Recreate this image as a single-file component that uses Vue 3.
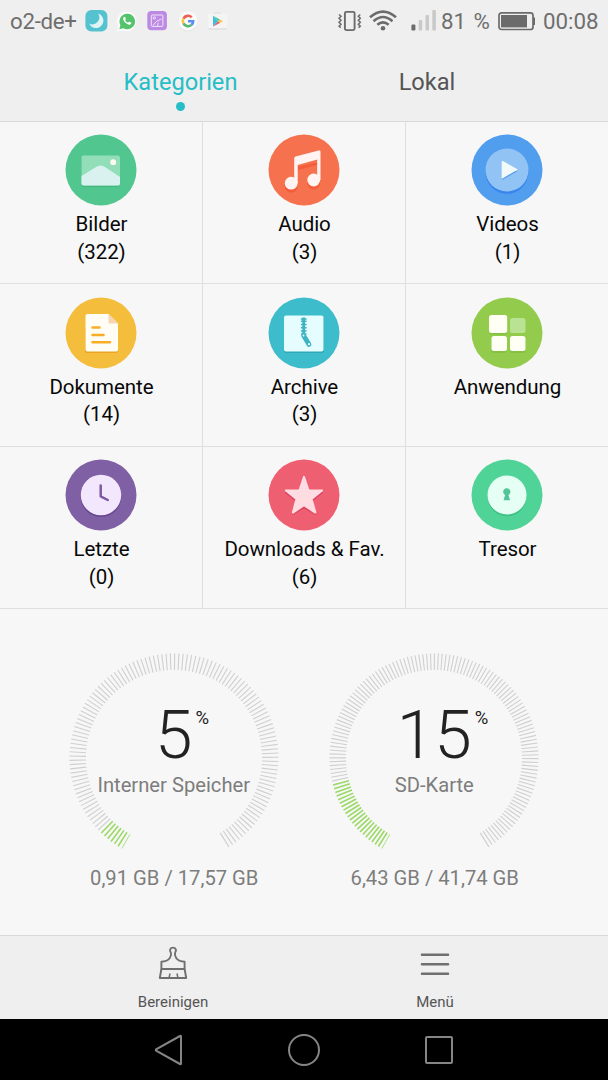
<script setup>
const categories = [
  { id: 'images', name: 'Bilder', count: '(322)', color: '#52c68f' },
  { id: 'audio', name: 'Audio', count: '(3)', color: '#f6724f' },
  { id: 'videos', name: 'Videos', count: '(1)', color: '#519eef' },
  { id: 'docs', name: 'Dokumente', count: '(14)', color: '#f5bd3c' },
  { id: 'archive', name: 'Archive', count: '(3)', color: '#3dbccb' },
  { id: 'apps', name: 'Anwendung', count: '', color: '#93cb4d' },
  { id: 'recent', name: 'Letzte', count: '(0)', color: '#8060a4' },
  { id: 'favorites', name: 'Downloads & Fav.', count: '(6)', color: '#ef5f72' },
  { id: 'safe', name: 'Tresor', count: '', color: '#50d397' },
]

const makeTicks = (total, percent) =>
  Array.from({ length: total }, (_, i) => {
    const a = ((30 + (i * 298.3) / (total - 1)) * Math.PI) / 180
    const s = -Math.sin(a)
    const c = Math.cos(a)
    return {
      on: i <= Math.round((total * percent) / 100),
      line: { x1: 105 + 88 * s, y1: 105 + 88 * c, x2: 105 + 104.5 * s, y2: 105 + 104.5 * c },
    }
  })

const storages = [
  { name: 'Interner Speicher', percent: 5, usage: '0,91 GB / 17,57 GB', ticks: makeTicks(128, 5) },
  { name: 'SD-Karte', percent: 15, usage: '6,43 GB / 41,74 GB', ticks: makeTicks(140, 15) },
]
</script>

<template>
  <div class="screen">
    <header class="top">
      <div class="status">
        <span class="carrier">o2-de+</span>
        <div class="notes">
          <svg viewBox="0 0 24 24">
            <rect x="1.4" y="1" width="22" height="21.6" rx="6" fill="#55c3cf" />
            <path d="M14.2 4.6A7.4 7.4 0 1 1 5.2 14.6 A7 7 0 0 0 14.2 4.6Z" fill="#dff4f6" />
          </svg>
          <svg viewBox="0 0 24 24">
            <path d="M2.8 21.8 4 17A9 9 0 1 1 8 20.5Z" fill="#fff" stroke="#fafafa" stroke-width="1.5" />
            <path d="M4.300 20.300 5.400 16.200A7.800 7.800 0 1 1 8.300 19.200Z" fill="#55c36b" />
            <path d="M9.3 7.7c-2.2 1.2-.8 4 .9 5.800 1.900 1.900 4.600 3.100 5.900 1.200.6-.9.1-1.200-1.700-2-.7-.3-1.100 1-1.600.9-1.100-.3-2.100-1.300-2.600-2.300-.2-.5.8-.8.6-1.600-.4-1.300-.8-2.200-1.500-2Z" fill="#fff" />
          </svg>
          <svg viewBox="0 0 24 24">
            <rect x="2.300" y="2" width="19.600" height="19.300" rx="4" fill="#bd8ae3" />
            <g fill="none" stroke="#f1e3fb" stroke-width="1">
              <rect x="6.300" y="6" width="11.600" height="11.400" rx=".8" />
              <circle cx="9.300" cy="9" r="1.200" />
              <path d="M8 16.500Q10.500 11.500 16.500 10M12.500 17 13.300 13.500" />
            </g>
          </svg>
          <svg viewBox="0 0 24 24">
            <circle cx="12" cy="12.500" r="9.800" fill="#dedede" />
            <circle cx="12" cy="12" r="9.700" fill="#fafafa" />
            <g fill="none" stroke-width="2.600">
              <path d="M15.700 8.300A5.200 5.200 0 0 0 7.400 9.600" stroke="#ee5f55" />
              <path d="M7.400 9.600A5.200 5.200 0 0 0 7.400 14.400" stroke="#f9c740" />
              <path d="M7.400 14.400A5.200 5.200 0 0 0 15.500 15.900" stroke="#58b870" />
              <path d="M15.500 15.900A5.200 5.200 0 0 0 17.200 12.200H12" stroke="#5792ef" />
            </g>
          </svg>
          <svg viewBox="0 0 24 24">
            <path d="M8.800 5V3.800H14.200V5" fill="none" stroke="#dfdfdf" />
            <path d="M2 5H21.500L20.900 20H2.600Z" fill="#f4f4f4" />
            <path d="M2.500 20H21" stroke="#d6d6d6" />
            <path d="M7 6.800V17.500L12.200 12.200Z" fill="#42bde0" />
            <path d="M7 6.800 12.200 12.200 14 10.400Z" fill="#49c9a0" />
            <path d="M7 17.500 12.200 12.200 14 14Z" fill="#ed5969" />
            <path d="M14 10.400 12.200 12.200 14 14 17 12.200Z" fill="#f9c348" />
          </svg>
        </div>
        <svg class="vibrate" viewBox="0 0 24 24">
          <g fill="none" stroke="#6b6b6b">
            <rect x="6.900" y="2.900" width="9.700" height="18.200" rx="1.500" stroke-width="1.900" />
            <path d="M1 5.500 3 7.200 1 9.200 3 11.200 1 13.200 3 15.200 1 17.200 2.800 18.700" stroke-width="1.500" />
            <path d="M22.300 5.500 20.300 7.200 22.300 9.200 20.300 11.200 22.300 13.200 20.300 15.200 22.300 17.200 20.500 18.700" stroke-width="1.500" />
          </g>
        </svg>
        <svg class="wifi" viewBox="0 0 28 24">
          <g fill="none" stroke="#6b6b6b" stroke-width="2.500">
            <path d="M1 8.300Q14-3 27 8.300" />
            <path d="M4.500 12.200Q14 3.900 23.500 12.200" />
            <path d="M8.300 15.800Q14 11 19.700 15.800" />
          </g>
          <circle cx="14" cy="19.300" r="2.300" fill="#6b6b6b" />
        </svg>
        <svg class="signal" viewBox="0 0 26 24">
          <rect x=".4" y="15.500" width="4" height="6" rx="1.200" fill="#6b6b6b" />
          <g fill="#c9c9c9">
            <rect x="7.700" y="11" width="3.500" height="10.500" rx="1" />
            <rect x="14.500" y="6" width="3.500" height="15.500" rx="1" />
            <rect x="21.300" y="1" width="3.600" height="20.500" rx="1" />
          </g>
        </svg>
        <span class="level">81 %</span>
        <svg class="battery" viewBox="0 0 38 20">
          <rect x="1" y="1.900" width="34" height="16.600" rx="2.500" fill="none" stroke="#6b6b6b" stroke-width="1.700" />
          <rect x="3" y="4" width="26" height="12.400" fill="#6b6b6b" />
          <path d="M36 6.500V14" stroke="#6b6b6b" stroke-width="2" />
        </svg>
        <span class="clock">00:08</span>
      </div>
      <nav class="tabs">
        <div class="tab active"><span>Kategorien</span><i></i></div>
        <div class="tab"><span>Lokal</span></div>
      </nav>
    </header>

    <main class="grid">
      <section v-for="c in categories" :key="c.id" class="cell">
        <svg class="icon" viewBox="0 0 72 72">
          <circle cx="36" cy="36" r="35.500" :fill="c.color" />
          <template v-if="c.id === 'images'">
            <rect x="16.500" y="23" width="38" height="30" rx="2" fill="#43b77f" />
            <rect x="16.500" y="21.500" width="38.500" height="30" rx="2" fill="#92deb9" />
            <path d="M16.500 42 29.500 34Q35.500 29 41.500 34L55 43V49.500Q55 51.500 53 51.500H18.500Q16.500 51.500 16.500 49.500Z" fill="#d9f2ef" />
            <circle cx="48.200" cy="28.200" r="2.900" fill="#fffdf4" />
          </template>
          <template v-else-if="c.id === 'audio'">
            <g fill="#f2532f" transform="translate(0 3)" opacity=".65">
              <circle cx="23.200" cy="49.200" r="6.500" /><circle cx="45.700" cy="46" r="6.500" />
              <path d="M30 29.500 49 25.500V28L30 33Z" />
            </g>
            <g fill="#fff4f1">
              <circle cx="23.200" cy="49.200" r="6.400" /><circle cx="45.700" cy="46" r="6.400" />
              <path d="M26.200 49V24.300Q26.200 23 27.500 22.600L50.600 16.500Q52.500 16 52.500 17.800V46H49.200V25.500L29.700 31V49Z" />
            </g>
          </template>
          <template v-else-if="c.id === 'videos'">
            <circle cx="36" cy="38.300" r="21.500" fill="#3985ec" />
            <circle cx="36" cy="36" r="21.500" fill="#92c3f5" />
            <path d="M31.200 46V29L46 37.500Z" fill="#559eed" />
            <path d="M30.700 44V27.500Q30.700 26.500 31.800 27.100L46 34.900Q46.800 35.500 46 36L31.800 44.300Q30.700 44.800 30.700 44Z" fill="#f1faf9" />
          </template>
          <template v-else-if="c.id === 'docs'">
            <rect x="20" y="30" width="32.500" height="26" rx="2" fill="#eca226" />
            <path d="M22.500 17H43.500L53 26.500V52.500Q53 54.500 51 54.500H22.500Q20.500 54.500 20.500 52.500V19Q20.500 17 22.500 17Z" fill="#fffdf4" />
            <path d="M43.500 17 53 26.500H44.500Q43.500 26.500 43.500 25.500Z" fill="#f8d5b4" />
            <path d="M27.500 30.500H34.500M27.500 38H38.500M27.500 45.200H45" stroke="#f9ad24" stroke-width="2.500" stroke-linecap="round" />
          </template>
          <template v-else-if="c.id === 'archive'">
            <rect x="16" y="20" width="40" height="36" rx="2" fill="#2fa9b8" />
            <rect x="16" y="18.500" width="39.500" height="36" rx="2" fill="#e5fdff" />
            <path d="M35.700 20.500V37" stroke="#3db4c1" stroke-width="2.800" />
            <path d="M32.900 22H38.600M32.900 24.300H38.600M32.900 27.500H38.600M32.900 30.700H38.600M32.900 34H38.600M33 37H38.500" stroke="#3db4c1" stroke-width="1.500" />
            <path d="M35.600 38.500 41 47.500" stroke="#3db4c1" stroke-width="4.800" stroke-linecap="round" />
            <circle cx="35.500" cy="38.500" r=".9" fill="#e5fdff" /><circle cx="41" cy="47.200" r="1.100" fill="#e5fdff" />
          </template>
          <template v-else-if="c.id === 'apps'">
            <g fill="#7cbd3e" opacity=".65"><rect x="18" y="20" width="18" height="17.500" rx="2" /><rect x="20.500" y="41" width="15" height="15" rx="2" /><rect x="39" y="41" width="15.500" height="15" rx="2" /></g>
            <rect x="18" y="18" width="18.200" height="18" rx="2.500" fill="#fffff5" />
            <rect x="39" y="21" width="15.500" height="15" rx="2.500" fill="#b9e293" />
            <rect x="20.500" y="39" width="15.500" height="15" rx="2.500" fill="#fffff5" />
            <rect x="39" y="39" width="15.500" height="15" rx="2.500" fill="#fffff5" />
          </template>
          <template v-else-if="c.id === 'recent'">
            <circle cx="36" cy="37.800" r="20.300" fill="#684990" />
            <circle cx="36" cy="36" r="20.200" fill="#f3e7fe" />
            <path d="M35.700 26.500V37.300L42.800 41" fill="none" stroke="#7c5aa0" stroke-width="2.500" stroke-linecap="round" stroke-linejoin="round" />
          </template>
          <template v-else-if="c.id === 'favorites'">
            <path d="M36 20 40.500 32.500 54 33.500 43.500 42 47.500 55 36 48.500 25 55 28.500 42 18 33.500 31.500 32.500Z" fill="#e14662" stroke="#e14662" stroke-width="2" stroke-linejoin="round" />
            <path d="M36 18 40.500 31.500 54 31.500 43.500 40 47.300 53.500 36 46 25 53.500 28.500 40 18 31.500 31.500 31.500Z" fill="#ffdce2" stroke="#ffdce2" stroke-width="2.200" stroke-linejoin="round" />
          </template>
          <template v-else>
            <circle cx="36" cy="38" r="19.300" fill="#3cc083" />
            <circle cx="36" cy="36" r="19.500" fill="#e5fff5" />
            <path d="M34.100 36A3.600 3.600 0 1 1 37.500 36L39 41.200H32.600Z" fill="#54c596" />
          </template>
        </svg>
        <span class="label">{{ c.name }}</span>
        <span class="label">{{ c.count }}</span>
      </section>
    </main>

    <section class="storage">
      <div v-for="s in storages" :key="s.name" class="gauge">
        <div class="dial">
          <svg class="ring" viewBox="0 0 210 210">
            <line v-for="(t, i) in s.ticks" :key="i" v-bind="t.line" :class="{ on: t.on, first: i === 0 }" />
          </svg>
          <div class="value"><span class="num">{{ s.percent }}<sup>%</sup></span></div>
          <div class="name">{{ s.name }}</div>
        </div>
        <div class="usage">{{ s.usage }}</div>
      </div>
    </section>

    <footer class="actions">
      <div class="action">
        <svg viewBox="0 0 32 36">
          <g fill="none" stroke="#6f6f6f" stroke-width="1.900" stroke-linejoin="round">
            <path d="M13.800 7.500Q12.600 6 13.200 4.300 14 2.600 16 2.600T18.800 4.300Q19.400 6 18.200 7.500C17.600 9 18 11.300 19.200 13 21.400 16 24 16.600 27.600 16.700V24H4.400V16.700C8 16.600 10.600 16 12.800 13 14 11.300 14.400 9 13.800 7.500Z" />
            <path d="M4.400 24 2.800 33H29.200L27.600 24" />
          </g>
          <path d="M13 28.500 12 33M20 28.500 21 33" stroke="#6f6f6f" stroke-width="1.500" />
        </svg>
        <span>Bereinigen</span>
      </div>
      <div class="action">
        <svg viewBox="0 0 32 36">
          <path d="M3 9.700H29M3 19.200H29M3 28.700H29" stroke="#6f6f6f" stroke-width="2.600" stroke-linecap="round" />
        </svg>
        <span>Menü</span>
      </div>
    </footer>

    <footer class="navbar">
      <svg viewBox="0 0 36 36"><path d="M30 4.600V31.400Q30 32.500 29 32L5.500 19Q4 18 5.500 17L29 4Q30 3.500 30 4.600Z" /></svg>
      <svg viewBox="0 0 36 36"><circle cx="18" cy="18" r="15" /></svg>
      <svg viewBox="0 0 36 36"><rect x="5" y="5" width="26" height="26" rx="1" /></svg>
    </footer>
  </div>
</template>

<style>
body {
  margin: 0;
}
</style>

<style scoped>
.screen {
  width: 608px;
  height: 1080px;
  display: flex;
  flex-direction: column;
  overflow: hidden;
  background: #f7f7f7;
  color: #080808;
  font-family: Roboto, "Liberation Sans", sans-serif;
}
svg {
  display: block;
  flex: none;
}
.top {
  height: 121px;
  flex: none;
  background: #efefef;
  border-bottom: 1px solid #d9d9d9;
}
.status {
  height: 41px;
  display: flex;
  align-items: center;
  padding-left: 10px;
  color: #6e6e6e;
  font-size: 22.3px;
  white-space: nowrap;
}
.status span {
  flex: none;
  line-height: 28px;
  padding-top: 1px;
}
.carrier {
  width: 74px;
  letter-spacing: -0.3px;
}
.notes {
  display: flex;
  gap: 6.5px;
}
.notes svg {
  width: 24px;
  height: 24px;
}
.vibrate {
  width: 24px;
  height: 24px;
  margin-left: 108px;
}
.wifi {
  width: 28px;
  height: 24px;
  margin-left: 7px;
}
.signal {
  width: 26px;
  height: 24px;
  margin: 0 4px 0 14px;
}
.level {
  width: 57px;
  word-spacing: 2px;
}
.battery {
  width: 38px;
  height: 20px;
  margin-right: 7px;
}
.tabs {
  height: 80px;
  display: grid;
  grid-template-columns: 246px 246px;
  justify-content: center;
  font-size: 23.6px;
  color: #555;
}
.tab {
  display: flex;
  flex-direction: column;
  align-items: center;
  padding-top: 27px;
  line-height: 28px;
}
.tab.active {
  padding-right: 1px;
  color: #26bdc7;
}
.tab i {
  width: 9px;
  height: 9px;
  margin-top: 6px;
  border-radius: 50%;
  background: #26bdc7;
}
.grid {
  display: grid;
  grid-template-columns: 203px 203px 202px;
  grid-template-rows: 162px 163px 162px;
  flex: none;
}
.cell {
  display: flex;
  flex-direction: column;
  align-items: center;
  padding-top: 12px;
  border-right: 1px solid #dfdfdf;
  border-bottom: 1px solid #dfdfdf;
  box-sizing: border-box;
}
.cell:nth-child(3n) {
  border-right: 0;
}
.cell:nth-child(n + 4):nth-child(-n + 6) {
  padding-top: 13px;
}
.icon {
  width: 72px;
  height: 72px;
  margin-bottom: 5px;
}
.cell:nth-child(n + 4):nth-child(-n + 6) .icon {
  margin-bottom: 4.5px;
}
.label {
  height: 27.5px;
  padding-left: 1px;
  font-size: 20.5px;
  letter-spacing: -0.06px;
  line-height: 27.5px;
  white-space: nowrap;
}
.storage {
  height: 326px;
  flex: none;
  display: grid;
  grid-template-columns: 260.5px 260.5px;
  justify-content: center;
}
.gauge {
  display: flex;
  flex-direction: column;
  align-items: center;
  padding-top: 44px;
}
.dial {
  position: relative;
  width: 210px;
  height: 210px;
  text-align: center;
}
.ring {
  position: absolute;
  inset: 0;
  width: 210px;
  height: 210px;
}
.ring line {
  stroke: #cfcfcf;
  stroke-width: 1.1;
}
.ring .on {
  stroke: #9bd967;
  stroke-width: 1.6;
}
.ring .first {
  stroke-width: 0.8;
}
.value {
  padding-top: 42px;
  font-size: 67.5px;
  font-weight: 300;
  line-height: 80px;
  color: #222;
}
.num {
  position: relative;
}
.num sup {
  position: absolute;
  left: calc(100% + 3px);
  top: 12px;
  font-size: 18.5px;
  font-weight: 400;
  line-height: 22px;
}
.name,
.usage {
  margin-top: -2px;
  font-size: 20.2px;
  line-height: 24px;
  color: #7d7d7d;
  white-space: nowrap;
}
.usage {
  margin-top: 3px;
  padding-left: 1px;
}
.actions {
  height: 83px;
  flex: none;
  display: grid;
  grid-template-columns: 262px 262px;
  justify-content: center;
  background: #efefef;
  border-top: 1px solid #d9d9d9;
}
.action {
  display: flex;
  flex-direction: column;
  align-items: center;
  padding-top: 9px;
  font-size: 15px;
  line-height: 18px;
  color: #555;
}
.action svg {
  width: 32px;
  height: 36px;
  margin-bottom: 12px;
}
.navbar {
  flex: 1;
  display: flex;
  justify-content: center;
  align-items: center;
  gap: 99px;
  background: #000;
}
.navbar svg {
  width: 36px;
  height: 36px;
  fill: none;
  stroke: #858585;
  stroke-width: 2;
}
</style>
